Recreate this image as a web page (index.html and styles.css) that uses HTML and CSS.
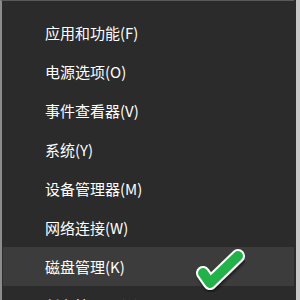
FILE: index.html
```html
<!DOCTYPE html>
<html>
<head>
<meta charset="utf-8">
<link rel="stylesheet" href="styles.css">
</head>
<body>
<div class="screen">
  <div class="menu">
    <div class="item">应用和功能(F)</div>
    <div class="item">电源选项(O)</div>
    <div class="item">事件查看器(V)</div>
    <div class="item">系统(Y)</div>
    <div class="item">设备管理器(M)</div>
    <div class="item">网络连接(W)</div>
    <div class="item active">磁盘管理(K)
      <svg class="check" width="50" height="44" viewBox="0 0 50 44">
        <defs>
          <filter id="sh" x="-30%" y="-30%" width="160%" height="160%">
            <feDropShadow dx="1" dy="2" stdDeviation="1.5" flood-color="#000" flood-opacity="0.6"/>
          </filter>
        </defs>
        <g filter="url(#sh)">
          <path d="M8 25 L15 35 L43 8" fill="none" stroke="#ffffff" stroke-width="14" stroke-linecap="round" stroke-linejoin="round"/>
          <path d="M8 25 L15 35 L43 8" fill="none" stroke="#22b24a" stroke-width="10" stroke-linecap="round" stroke-linejoin="round"/>
        </g>
      </svg>
    </div>
    <div class="item">任务管理器(T)</div>
  </div>
  <div class="edge"></div>
</div>
</body>
</html>
```
FILE: styles.css
```css
html, body {
  margin: 0;
  padding: 0;
  background: #2b2b2b;
}
.screen {
  width: 300px;
  height: 300px;
  overflow: hidden;
  display: flex;
  background: #2b2b2b;
}
.menu {
  width: 294px;
  height: 300px;
  box-sizing: border-box;
  border-left: 2px solid #8c8c8c;
  border-top: 1px solid #5a5a5a;
  padding-top: 12px;
  padding-left: 1px;
  display: flex;
  flex-direction: column;
}
.item {
  position: relative;
  flex: none;
  height: 39px;
  line-height: 39px;
  padding-left: 42px;
  color: #ffffff;
  font-family: "Noto Sans CJK SC", "Noto Sans", sans-serif;
  font-size: 15px;
  white-space: nowrap;
}
.item.active {
  background: #3c3c3c;
}
.check {
  position: absolute;
  left: 192px;
  top: 1px;
}
.edge {
  width: 6px;
  height: 300px;
  background: linear-gradient(to right, #2b2b2b 0, #2b2b2b 2px, #c9c9c9 2px);
}
```
